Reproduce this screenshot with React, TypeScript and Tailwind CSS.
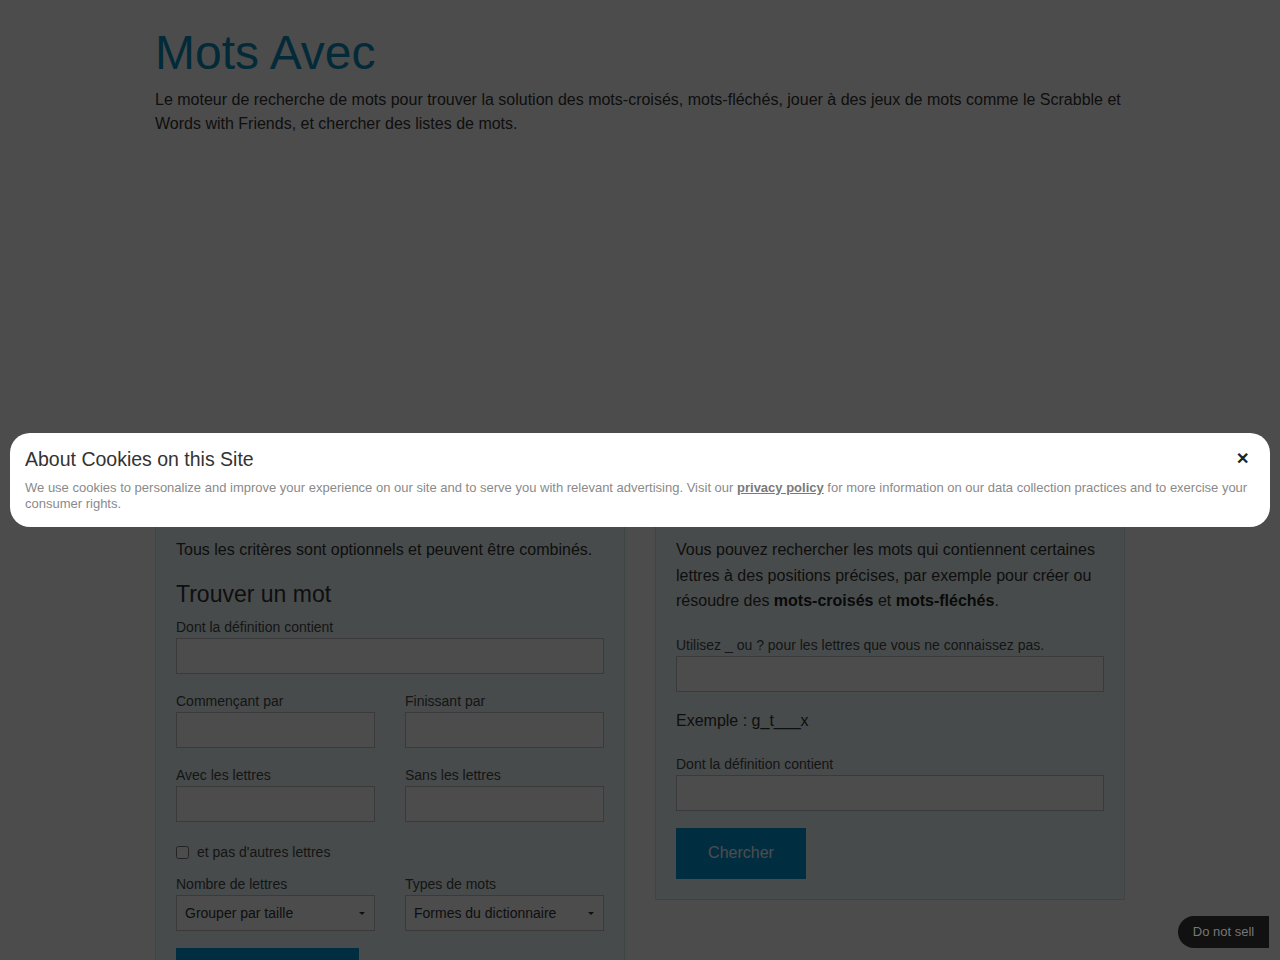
import React from 'react';

const font = { fontFamily: '"Liberation Sans", Arial, sans-serif' };

function Field({ label, className = '' }: { label: string; className?: string }) {
  return (
    <div className={className}>
      <label className="block h-[21px] text-sm leading-5 text-[#484848]">{label}</label>
      <input type="text" className="block h-9 w-full border border-[#c4c4c4] bg-white px-2 text-sm outline-none" />
    </div>
  );
}

function FakeSelect({ label, value }: { label: string; value: string }) {
  return (
    <div>
      <label className="block h-[21px] text-sm leading-5 text-[#484848]">{label}</label>
      <div className="flex h-9 w-full items-center justify-between border border-[#c4c4c4] bg-white pl-2 pr-[9px] text-sm text-[#333]">
        <span>{value}</span>
        <span className="h-0 w-0 border-x-[3px] border-t-[3px] border-x-transparent border-t-[#333]" />
      </div>
    </div>
  );
}

export default function App() {
  return (
    <div className="min-h-screen bg-white text-[#333]" style={font}>
      <div className="mx-auto w-[970px] pt-[26px]">
        {/* Header */}
        <h1 className="text-[48px] leading-[53px] text-[#0c8cbc]">Mots Avec</h1>
        <p className="mt-[9px] text-base leading-6 text-[#333]">
          Le moteur de recherche de mots pour trouver la solution des mots-croisés, mots-fléchés, jouer à des jeux de mots comme le Scrabble et Words with Friends, et chercher des listes de mots.
        </p>

        {/* Ad slot */}
        <div className="h-[334px]" />

        {/* Search panels */}
        <div className="grid grid-cols-2 gap-[30px] items-start">
          <div className="border border-[#d0e2e2] bg-[#eefcfc] p-5">
            <div className="mb-5 h-[27px]" />
            <p className="text-base leading-6">Tous les critères sont optionnels et peuvent être combinés.</p>
            <h3 className="mt-5 text-[23px] leading-[25px] text-[#333]">Trouver un mot</h3>
            <Field label="Dont la définition contient" className="mt-[10px]" />
            <div className="mt-[17px] grid grid-cols-2 gap-x-[30px] gap-y-[17px]">
              <Field label="Commençant par" />
              <Field label="Finissant par" />
              <Field label="Avec les lettres" />
              <Field label="Sans les lettres" />
            </div>
            <label className="mt-5 flex h-5 items-center text-sm text-[#484848]">
              <input type="checkbox" className="m-0 h-[13px] w-[13px]" />
              <span className="ml-2">et pas d'autres lettres</span>
            </label>
            <div className="mt-3 grid grid-cols-2 gap-x-[30px]">
              <FakeSelect label="Nombre de lettres" value="Grouper par taille" />
              <FakeSelect label="Types de mots" value="Formes du dictionnaire" />
            </div>
            <button className="mt-[17px] h-[51px] w-[183px] bg-[#0398d6] text-base text-white">Rechercher</button>
          </div>

          <div className="border border-[#d0e2e2] bg-[#eefcfc] p-5">
            <div className="mb-[19px] h-[27px]" />
            <p className="text-base leading-[25.6px]">
              Vous pouvez rechercher les mots qui contiennent certaines lettres à des positions précises, par exemple pour créer ou résoudre des <b className="text-[#222]">mots-croisés</b> et <b className="text-[#222]">mots-fléchés</b>.
            </p>
            <Field label="Utilisez _ ou ? pour les lettres que vous ne connaissez pas." className="mt-[21px]" />
            <p className="mt-[17px] text-base leading-6">Exemple : g_t___x</p>
            <Field label="Dont la définition contient" className="mt-[21px]" />
            <button className="mt-[17px] h-[51px] w-[130px] bg-[#0398d6] text-base text-white">Chercher</button>
          </div>
        </div>
        <div className="h-16" />
      </div>

      {/* Dim overlay */}
      <div className="fixed inset-0 z-10 bg-black/70" />

      {/* Cookie banner */}
      <div className="fixed left-[10px] right-[10px] top-[433px] z-20 rounded-[20px] bg-white px-[15px] pb-[15px] pt-[14px]">
        <div className="flex items-center justify-between">
          <h2 className="text-[19.5px] leading-6 text-[#333]">About Cookies on this Site</h2>
          <button className="mr-[6px] text-[16px] font-bold leading-6 text-[#222]">✕</button>
        </div>
        <p className="mt-[9px] text-[13px] leading-4 text-[#8a8a8a]">
          We use cookies to personalize and improve your experience on our site and to serve you with relevant advertising. Visit our{' '}
          <a className="font-bold text-[#7a7a7a] underline">privacy policy</a> for more information on our data collection practices and to exercise your consumer rights.
        </p>
      </div>

      {/* Do not sell */}
      <button className="fixed bottom-[12px] right-[11px] z-20 flex h-8 w-[91px] items-center justify-center rounded-l-full rounded-tr-[14px] bg-[#111] text-[13px] text-[#777]">
        Do not sell
      </button>
    </div>
  );
}
